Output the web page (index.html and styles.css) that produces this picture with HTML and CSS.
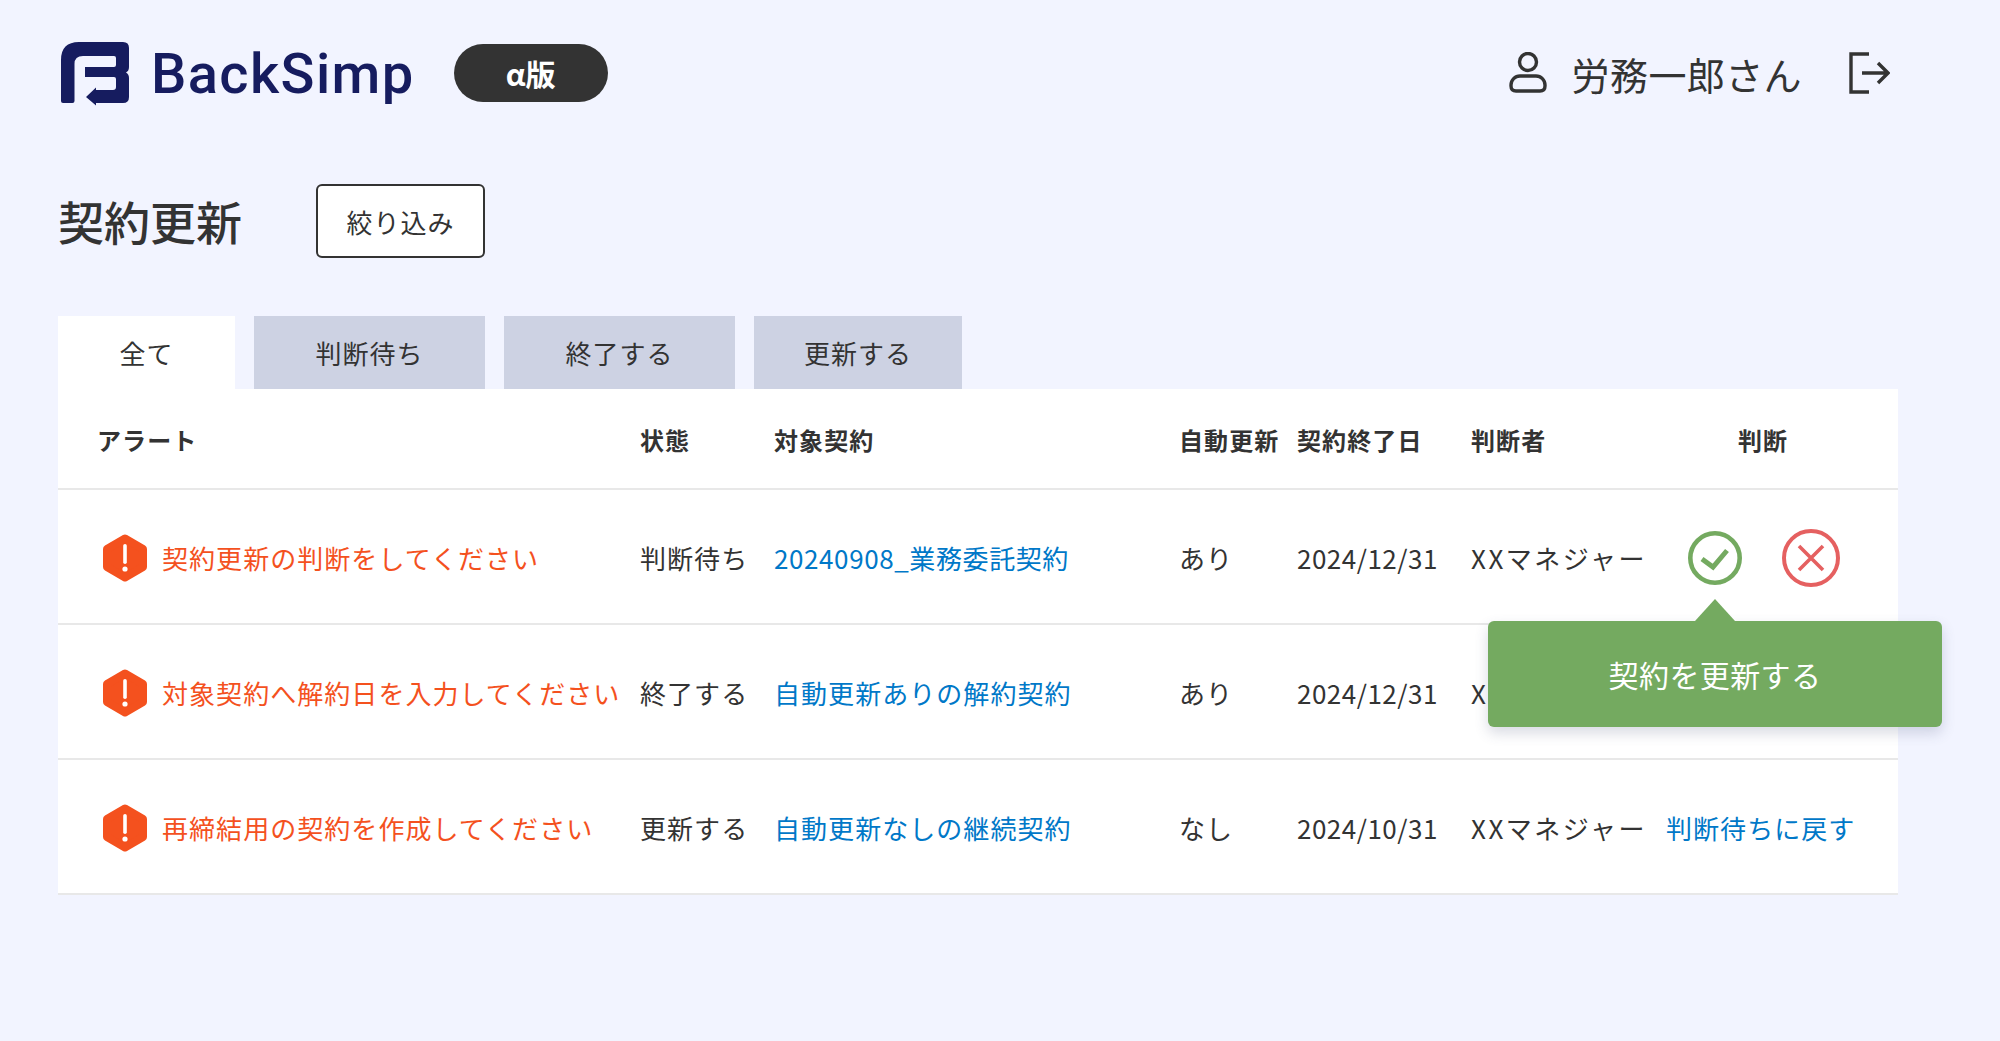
FILE: index.html
```html
<!DOCTYPE html>
<html lang="ja">
<head>
  <meta charset="UTF-8">
  <title>契約更新</title>
  <link rel="stylesheet" href="styles.css">
</head>
<body>
  <header class="topbar">
    <div class="brand">
      <svg class="logo" viewBox="0 0 68 61">
        <path fill="#161c5f" d="M2 61Q0 61 0 59V18Q0 0 18 0H62Q68 0 68 6V25Q68 29 65 30.5Q68 32 68 36V55Q68 61 62 61H35V63.5L25 55L35 45.5V48H52Q55 48 55 45V37Q55 35 53 35H24V25H53Q55 25 55 23V16Q55 14 53 14H22Q13.5 14 13.5 22V59Q13.5 61 11.5 61Z"/>
      </svg>
      <span class="brand-name">BackSimp</span>
      <span class="version">α版</span>
    </div>
    <div class="account">
      <svg class="icon-user" viewBox="0 0 38 42" fill="none" stroke="#333" stroke-width="3.4">
        <circle cx="19" cy="10" r="8.5"/>
        <path d="M11 24H27C32 24 36 28 36 33V34Q36 39 31 39H7Q2 39 2 34V33C2 28 6 24 11 24Z"/>
      </svg>
      <span class="account-name">労務一郎さん</span>
      <svg class="icon-logout" viewBox="0 0 42 42" fill="none" stroke="#333" stroke-width="3.4">
        <path d="M21 2H3V40H21"/>
        <path d="M14 21H40M30 11L40 21L30 31"/>
      </svg>
    </div>
  </header>

  <section class="title-row">
    <h1>契約更新</h1>
    <button class="filter-btn">絞り込み</button>
  </section>

  <nav class="tabs">
    <div class="tab active tab-all">全て</div>
    <div class="tab tab-wide">判断待ち</div>
    <div class="tab tab-wide">終了する</div>
    <div class="tab tab-last">更新する</div>
  </nav>

  <div class="table">
    <div class="row head">
      <div>アラート</div>
      <div>状態</div>
      <div>対象契約</div>
      <div>自動更新</div>
      <div>契約終了日</div>
      <div>判断者</div>
      <div class="center">判断</div>
    </div>

    <div class="row">
      <div class="alert">
        <svg class="hex" viewBox="0 0 44 48"><path fill="#f4511e" stroke="#f4511e" stroke-width="8" stroke-linejoin="round" d="M22 4.5L40 15V33L22 43.5L4 33V15Z"/><rect x="20.2" y="10" width="3.6" height="20" rx="1.8" fill="#fff"/><circle cx="22" cy="35" r="2.6" fill="#fff"/></svg>
        <span>契約更新の判断をしてください</span>
      </div>
      <div>判断待ち</div>
      <div class="code-link"><a href="#">20240908_業務委託契約</a></div>
      <div>あり</div>
      <div class="date">2024/12/31</div>
      <div class="who">XXマネジャー</div>
      <div class="decide">
        <svg class="icon-ok" viewBox="0 0 54 54" fill="none" stroke="#74aa60" stroke-width="4.6"><circle cx="27" cy="27" r="24.7"/><path d="M14 28L25 36L39 19.5" stroke-width="5"/></svg>
        <svg class="icon-no" viewBox="0 0 58 58" fill="none" stroke="#e56060" stroke-width="4"><circle cx="29" cy="29" r="27"/><path d="M17 17L41 41M41 17L17 41" stroke-width="3.6"/></svg>
      </div>
    </div>

    <div class="row">
      <div class="alert">
        <svg class="hex" viewBox="0 0 44 48"><path fill="#f4511e" stroke="#f4511e" stroke-width="8" stroke-linejoin="round" d="M22 4.5L40 15V33L22 43.5L4 33V15Z"/><rect x="20.2" y="10" width="3.6" height="20" rx="1.8" fill="#fff"/><circle cx="22" cy="35" r="2.6" fill="#fff"/></svg>
        <span>対象契約へ解約日を入力してください</span>
      </div>
      <div>終了する</div>
      <div><a href="#">自動更新ありの解約契約</a></div>
      <div>あり</div>
      <div class="date">2024/12/31</div>
      <div class="who">XXマネジャー</div>
      <div></div>
    </div>

    <div class="row">
      <div class="alert">
        <svg class="hex" viewBox="0 0 44 48"><path fill="#f4511e" stroke="#f4511e" stroke-width="8" stroke-linejoin="round" d="M22 4.5L40 15V33L22 43.5L4 33V15Z"/><rect x="20.2" y="10" width="3.6" height="20" rx="1.8" fill="#fff"/><circle cx="22" cy="35" r="2.6" fill="#fff"/></svg>
        <span>再締結用の契約を作成してください</span>
      </div>
      <div>更新する</div>
      <div><a href="#">自動更新なしの継続契約</a></div>
      <div>なし</div>
      <div class="date">2024/10/31</div>
      <div class="who">XXマネジャー</div>
      <div><a href="#">判断待ちに戻す</a></div>
    </div>

    <div class="tooltip">契約を更新する</div>
  </div>
</body>
</html>
```

FILE: styles.css
```css
* {
  box-sizing: border-box;
}
body {
  margin: 0;
  min-height: 1041px;
  padding: 0 102px 0 58px;
  background-color: #f2f4ff;
  color: #333;
  font-family: "Noto Sans CJK JP", "Noto Sans", sans-serif;
  font-size: 26px;
  letter-spacing: 1.05px;
}
a {
  color: #0078c8;
  text-decoration: none;
}

.topbar {
  display: flex;
  justify-content: space-between;
  align-items: center;
  height: 146px;
  margin-right: 8px;
}
.brand {
  display: flex;
  align-items: center;
}
.logo {
  width: 68px;
  height: 61px;
  overflow: visible;
  margin-left: 3px;
  margin-top: -2px;
}
.brand-name {
  margin-left: 22px;
  margin-top: 2px;
  font-family: Roboto, sans-serif;
  font-size: 56px;
  font-weight: 500;
  color: #161c5f;
  letter-spacing: 1.4px;
  line-height: 1;
}
.version {
  margin-left: 39px;
  width: 154px;
  height: 58px;
  border-radius: 29px;
  background-color: #333;
  color: #fff;
  font-size: 30px;
  font-weight: 700;
  letter-spacing: 0;
  display: flex;
  align-items: center;
  justify-content: center;
}
.account {
  display: flex;
  align-items: center;
}
.icon-user {
  width: 38px;
  height: 42px;
}
.account-name {
  margin-left: 25px;
  font-size: 38px;
  letter-spacing: 0.4px;
}
.icon-logout {
  width: 42px;
  height: 42px;
  margin-left: 46px;
}

.title-row {
  display: flex;
  align-items: center;
  gap: 74px;
  height: 80px;
  margin-top: 34px;
}
h1 {
  margin: 0;
  font-size: 46px;
  font-weight: 500;
  letter-spacing: 0;
}
.filter-btn {
  width: 169px;
  height: 74px;
  margin-top: 2px;
  border: 2px solid #333;
  border-radius: 6px;
  background-color: #fff;
  color: #333;
  font-family: inherit;
  font-size: 26px;
  letter-spacing: 1.05px;
}

.tabs {
  display: flex;
  gap: 19px;
  margin-top: 56px;
}
.tab {
  height: 73px;
  display: flex;
  align-items: center;
  justify-content: center;
  background-color: #cdd2e3;
}
.tab.active {
  background-color: #fff;
}
.tab-all {
  width: 177px;
}
.tab-wide {
  width: 231px;
}
.tab-last {
  width: 208px;
}

.table {
  position: relative;
  width: 1840px;
  background-color: #fff;
}
.row {
  display: grid;
  grid-template-columns: 582px 134px 405px 118px 174px 195px 232px;
  align-items: center;
  height: 135px;
  padding-top: 2px;
  border-bottom: 2px solid #e8e8e8;
  white-space: nowrap;
}
.row.head {
  height: 101px;
  font-size: 24px;
  font-weight: 700;
  letter-spacing: 1.1px;
}
.row > :first-child {
  padding-left: 39px;
}
.center {
  text-align: center;
  padding-right: 38px;
}
.code-link {
  letter-spacing: 0.6px;
}
.date {
  letter-spacing: 0.5px;
}
.who {
  letter-spacing: 2.5px;
}
.alert {
  display: flex;
  align-items: center;
  color: #f4511e;
}
.row > .alert {
  padding-left: 45px;
}
.hex {
  width: 44px;
  height: 48px;
  margin-right: 15px;
  flex: none;
}
.decide {
  display: flex;
  align-items: center;
  gap: 40px;
  padding-left: 22px;
}
.icon-ok {
  width: 54px;
  height: 54px;
}
.icon-no {
  width: 58px;
  height: 58px;
}
.tooltip {
  position: absolute;
  left: 1430px;
  top: 232px;
  width: 454px;
  height: 106px;
  display: flex;
  align-items: center;
  justify-content: center;
  border-radius: 6px;
  background-color: #74aa60;
  color: #fff;
  font-size: 30px;
  letter-spacing: 0.4px;
  box-shadow: 0 6px 14px rgba(60, 70, 110, 0.2);
}
.tooltip::before {
  content: "";
  position: absolute;
  left: 207px;
  top: -22px;
  border-left: 20px solid transparent;
  border-right: 20px solid transparent;
  border-bottom: 22px solid #74aa60;
}
```
